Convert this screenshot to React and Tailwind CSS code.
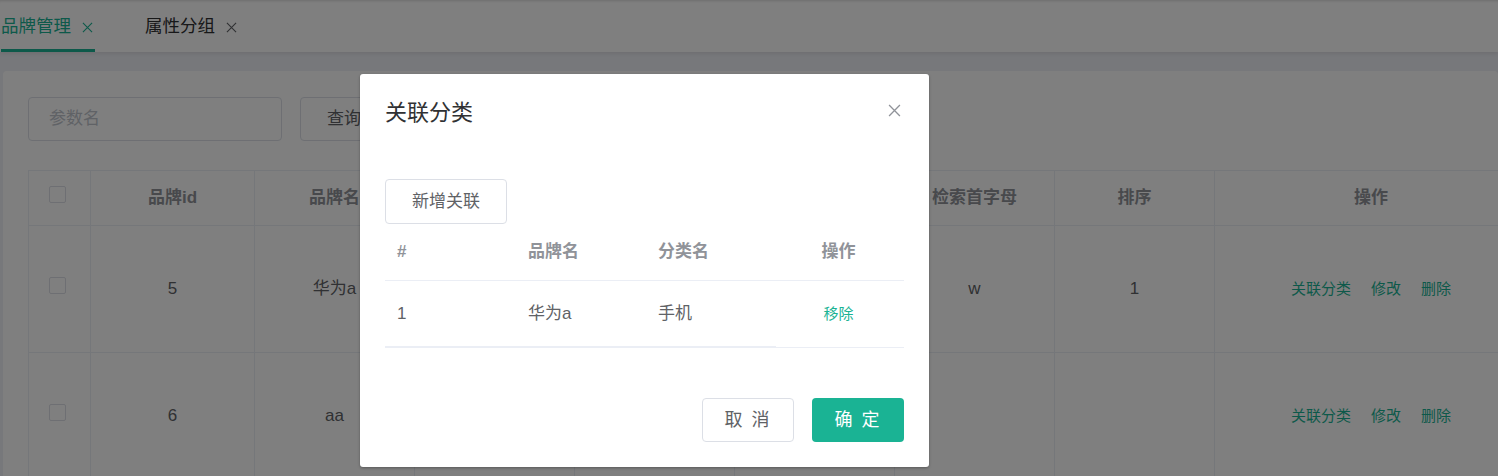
import React from "react";

const font = { fontFamily: '"Liberation Sans", "Noto Sans CJK SC", sans-serif' };

function Check() {
  return <span className="inline-block w-[17px] h-[17px] border border-[#dcdfe6] rounded-[2px] bg-white" />;
}

function X({ className }) {
  return (
    <svg viewBox="0 0 12 12" className={className} fill="none" stroke="currentColor" strokeWidth="1.2">
      <path d="M1 1L11 11M11 1L1 11" />
    </svg>
  );
}

const cols = [62, 164, 160, 160, 160, 160, 160, 160, 313];

export default function App() {
  const rows = [
    { id: "5", name: "华为a", letter: "w", sort: "1", h: "h-[127px]" },
    { id: "6", name: "aa", letter: "", sort: "", h: "h-[127px]" },
  ];
  return (
    <div style={font} className="relative w-[1498px] h-[476px] overflow-hidden bg-[#eff0f6]">
      {/* tab bar */}
      <div className="h-[52px] bg-white shadow-[0_2px_4px_rgba(0,0,0,0.08),inset_0_3px_3px_-2px_rgba(0,0,0,0.15)] flex items-end pl-[1px] gap-[50px]">
        <div className="h-[52px] flex items-center border-b-[3px] border-[#1ab394] text-[#1ab394] pt-[5px]">
          <span className="text-[17.5px] leading-none">品牌管理</span>
          <X className="w-[11px] h-[11px] ml-[11px] mr-[2px]" />
        </div>
        <div className="h-[52px] flex items-center text-[#303133] pt-[2px]">
          <span className="text-[17.5px] leading-none">属性分组</span>
          <X className="w-[11px] h-[11px] ml-[11px] text-[#606266]" />
        </div>
      </div>
      {/* content */}
      <div className="pt-[19px] pl-[3px]">
        <div className="bg-white rounded-[4px] pt-[26px] pl-[25px] h-[420px]">
          <div className="flex gap-[18px]">
            <div className="w-[254px] h-[44px] border border-[#dcdfe6] rounded-[4px] flex items-center pl-[20px] text-[17px] text-[#c0c4cc]">参数名</div>
            <div className="w-[100px] h-[44px] border border-[#dcdfe6] rounded-[4px] flex items-center pl-[26px] text-[17px] text-[#606266]">查询</div>
          </div>
          <table className="mt-[29px] border-collapse table-fixed text-[17px] text-[#606266]" style={{ width: cols.reduce((a, b) => a + b, 0) }}>
            <colgroup>
              {cols.map((w, i) => (
                <col key={i} style={{ width: w }} />
              ))}
            </colgroup>
            <thead>
              <tr className="h-[55px]">
                <th className="border border-[#ebeef5] text-left pl-[20px]"><Check /></th>
                {["品牌id", "品牌名", "logo", "介绍", "显示状态", "检索首字母", "排序", "操作"].map((t) => (
                  <th key={t} className="border border-[#ebeef5] font-bold text-[#909399] text-center">{t}</th>
                ))}
              </tr>
            </thead>
            <tbody>
              {rows.map((r) => (
                <tr key={r.id} className={r.h}>
                  <td className="border border-[#ebeef5] pl-[20px]"><Check /></td>
                  <td className="border border-[#ebeef5] text-center">{r.id}</td>
                  <td className="border border-[#ebeef5] text-center">{r.name}</td>
                  <td className="border border-[#ebeef5]"></td>
                  <td className="border border-[#ebeef5]"></td>
                  <td className="border border-[#ebeef5]"></td>
                  <td className="border border-[#ebeef5] text-center">{r.letter}</td>
                  <td className="border border-[#ebeef5] text-center">{r.sort}</td>
                  <td className="border border-[#ebeef5] text-center text-[15px] text-[#1ab394]">
                    <span>关联分类</span>
                    <span className="ml-[20px]">修改</span>
                    <span className="ml-[20px]">删除</span>
                  </td>
                </tr>
              ))}
            </tbody>
          </table>
        </div>
      </div>

      {/* overlay */}
      <div className="absolute inset-0 bg-black/50" />

      {/* dialog */}
      <div className="absolute left-[360px] top-[74px] w-[569px] h-[393px] bg-white rounded-[3px] shadow-[0_1px_3px_rgba(0,0,0,0.3)] flex flex-col">
        <div className="flex items-center justify-between pl-[25px] pr-[28px] pt-[25px]">
          <span className="text-[22px] leading-[28px] text-[#303133]">关联分类</span>
          <X className="w-[13px] h-[13px] text-[#909399] -mt-[5px]" />
        </div>
        <div className="px-[25px] pt-[52px]">
          <div className="w-[122px] h-[45px] border border-[#dcdfe6] rounded-[4px] flex items-center justify-center text-[17px] text-[#606266]">新增关联</div>
          <div className="text-[17px]">
            <div className="grid grid-cols-[131px_130px_127px_131px] h-[57px] items-center border-b border-[#ebeef5] font-bold text-[#909399]">
              <span className="pl-[12px]">#</span>
              <span className="pl-[12px]">品牌名</span>
              <span className="pl-[12px]">分类名</span>
              <span className="text-center">操作</span>
            </div>
            <div className="relative grid grid-cols-[131px_130px_127px_131px] h-[66px] items-center text-[#606266]">
              <span className="pl-[12px]">1</span>
              <span className="pl-[12px]">华为a</span>
              <span className="pl-[12px]">手机</span>
              <span className="text-center text-[15px] text-[#1ab394]">移除</span>
              <div className="absolute left-0 bottom-[-1px] w-[391px] h-[2px] bg-[#ebeef5]" />
              <div className="absolute right-0 bottom-[-1px] w-[128px] h-[1px] bg-[#ebeef5]" />
            </div>
          </div>
        </div>
        <div className="flex justify-end gap-[18px] pr-[25px] mt-auto pb-[25px]">
          <div className="w-[92px] h-[44px] border border-[#dcdfe6] rounded-[4px] flex items-center justify-center text-[18px] text-[#606266] tracking-[2px]">取 消</div>
          <div className="w-[92px] h-[44px] rounded-[4px] bg-[#1ab394] flex items-center justify-center text-[18px] text-white tracking-[2px]">确 定</div>
        </div>
      </div>
    </div>
  );
}
